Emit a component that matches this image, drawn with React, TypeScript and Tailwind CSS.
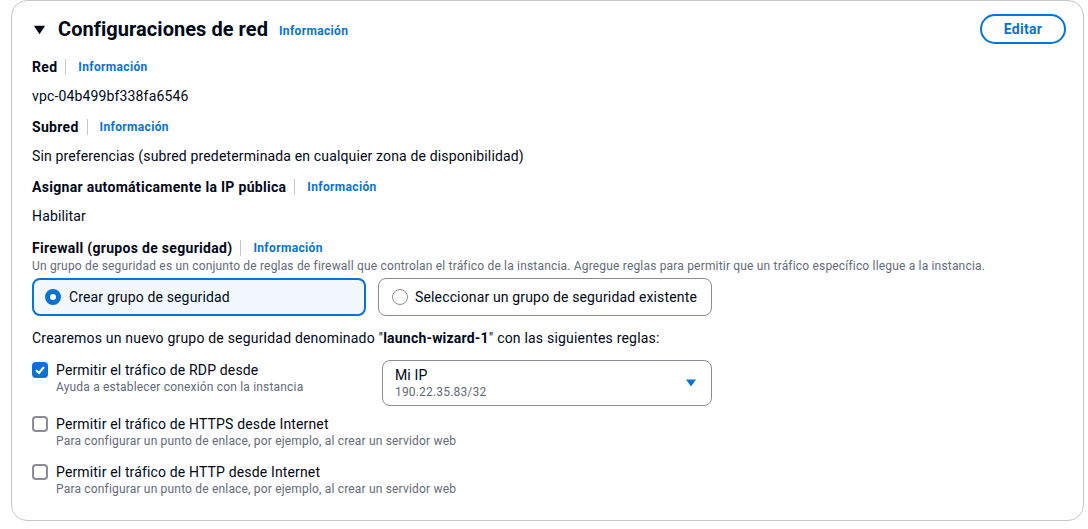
const font = { fontFamily: "Roboto, 'Noto Sans', sans-serif" };

function Info() {
  return <a className="text-[12px] font-bold leading-[16px] tracking-[0.35px] text-[#0972d3]">Información</a>;
}

function Etiqueta({ texto }: { texto: string }) {
  return (
    <div className="flex h-[20px] items-center">
      <span className="text-[14px] font-bold leading-[20px] tracking-[0.3px] text-[#000716]">{texto}</span>
      <span className="ml-[8px] mr-[12px] h-[16px] w-px bg-[#c6c6cd]" />
      <Info />
    </div>
  );
}

function Casilla({
  marcada,
  titulo,
  ayuda,
}: {
  marcada?: boolean;
  titulo: string;
  ayuda: string;
}) {
  return (
    <div className="flex items-start gap-[8px]">
      <span
        className={
          marcada
            ? "mt-[1px] flex size-[16px] items-center justify-center rounded-[4px] bg-[#0972d3]"
            : "mt-[1px] size-[16px] rounded-[4px] border-2 border-[#8c8c94] bg-white"
        }
      >
        {marcada && (
          <svg viewBox="0 0 16 16" className="size-[16px]">
            <path d="M4 8.2 L6.9 11 L12 5" fill="none" stroke="white" strokeWidth="2" />
          </svg>
        )}
      </span>
      <div>
        <p className="text-[14px] leading-[18px] tracking-[0.15px] text-[#000716]">{titulo}</p>
        <p className="text-[12px] leading-[16px] tracking-[0.18px] text-[#5f6b7a]">{ayuda}</p>
      </div>
    </div>
  );
}

function Valor({ children }: { children: React.ReactNode }) {
  return <p className="mt-[9px] text-[14px] leading-[20px] tracking-[0.15px] text-[#000716]">{children}</p>;
}

export default function App() {
  return (
    <div className="bg-white pb-[8px] pl-[11px] pr-[4px] pt-0" style={font}>
      <div className="rounded-[16px] border border-[#c6c6cd] bg-white pb-[23px] pl-[20px] pr-[17px] pt-[13px]">
        <div className="flex h-[30px] items-center justify-between">
          <div className="flex items-center">
            <svg viewBox="0 0 14 14" className="ml-[1px] mr-[12px] size-[13px]">
              <path d="M1 3 L13 3 L7 12 Z" fill="#000716" />
            </svg>
            <h2 className="text-[20px] font-bold leading-[28px] tracking-[0.05px] text-[#000716]">Configuraciones de red</h2>
            <span className="ml-[11px] mt-[2px]">
              <Info />
            </span>
          </div>
          <button className="h-[30px] w-[86px] rounded-full border-2 border-[#0972d3] text-[14px] font-bold tracking-[0.3px] text-[#0972d3]">
            Editar
          </button>
        </div>

        <div className="mt-[13px] flex flex-col gap-[11px]">
          <div>
            <Etiqueta texto="Red" />
            <Valor>vpc-04b499bf338fa6546</Valor>
          </div>
          <div>
            <Etiqueta texto="Subred" />
            <Valor>Sin preferencias (subred predeterminada en cualquier zona de disponibilidad)</Valor>
          </div>
          <div>
            <Etiqueta texto="Asignar automáticamente la IP pública" />
            <Valor>Habilitar</Valor>
          </div>
        </div>

        <div className="mt-[12px]">
          <Etiqueta texto="Firewall (grupos de seguridad)" />
          <p className="text-[12px] leading-[16px] tracking-[0.18px] text-[#5f6b7a]">
            Un grupo de seguridad es un conjunto de reglas de firewall que controlan el tráfico de la instancia. Agregue reglas para permitir que un tráfico específico llegue a la instancia.
          </p>
          <div className="mt-[4px] grid grid-cols-[334px_334px] gap-[12px]">
            <div className="flex h-[38px] items-center gap-[8px] rounded-[8px] border-2 border-[#0972d3] bg-[#f2f8fd] px-[11px]">
              <span className="size-[16px] rounded-full border-[5px] border-[#0972d3] bg-white" />
              <span className="text-[14px] leading-[20px] tracking-[0.15px] text-[#000716]">Crear grupo de seguridad</span>
            </div>
            <div className="flex h-[38px] items-center gap-[7px] rounded-[8px] border border-[#8c8c94] bg-white px-[13px]">
              <span className="size-[16px] rounded-full border border-[#8c8c94] bg-white" />
              <span className="text-[14px] leading-[20px] tracking-[0.15px] text-[#000716]">
                Seleccionar un grupo de seguridad existente
              </span>
            </div>
          </div>
        </div>

        <p className="mt-[12px] text-[14px] leading-[20px] tracking-[0.2px] text-[#000716]">
          Crearemos un nuevo grupo de seguridad denominado "<b>launch-wizard-1</b>" con las siguientes reglas:
        </p>

        <div className="mt-[12px] flex flex-col">
          <div className="flex items-start">
            <div className="w-[350px] pt-[1px]">
              <Casilla
                marcada
                titulo="Permitir el tráfico de RDP desde"
                ayuda="Ayuda a establecer conexión con la instancia"
              />
            </div>
            <div className="flex h-[46px] w-[330px] items-center justify-between rounded-[8px] border border-[#8c8c94] pl-[12px] pr-[15px]">
              <div>
                <p className="text-[14px] leading-[18px] tracking-[0.15px] text-[#000716]">Mi IP</p>
                <p className="text-[12px] leading-[16px] tracking-[0.18px] text-[#5f6b7a]">190.22.35.83/32</p>
              </div>
              <svg viewBox="0 0 10 8" className="h-[8px] w-[10px]">
                <path d="M0 0.5 L10 0.5 L5 7.5 Z" fill="#0972d3" />
              </svg>
            </div>
          </div>
          <div className="mt-[9px]">
            <Casilla
              titulo="Permitir el tráfico de HTTPS desde Internet"
              ayuda="Para configurar un punto de enlace, por ejemplo, al crear un servidor web"
            />
          </div>
          <div className="mt-[14px]">
            <Casilla
              titulo="Permitir el tráfico de HTTP desde Internet"
              ayuda="Para configurar un punto de enlace, por ejemplo, al crear un servidor web"
            />
          </div>
        </div>
      </div>
    </div>
  );
}
